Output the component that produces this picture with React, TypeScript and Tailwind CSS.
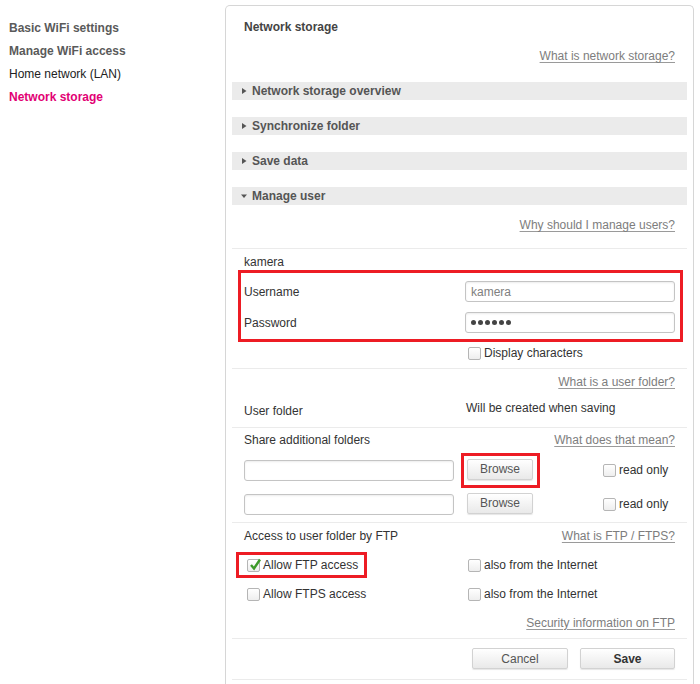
import React from "react";

const navItems = [
  { label: "Basic WiFi settings", cls: "font-bold text-[#5a5a5a]" },
  { label: "Manage WiFi access", cls: "font-bold text-[#5a5a5a]" },
  { label: "Home network (LAN)", cls: "font-normal text-[#222]" },
  { label: "Network storage", cls: "font-bold text-[#e20074]" },
];

function Hr() {
  return <div className="h-px bg-[#ebebeb]" />;
}

function HelpLink({ children }: { children: React.ReactNode }) {
  return <span className="pt-px text-[#7d7d7d] underline underline-offset-2 decoration-[#9a9a9a]">{children}</span>;
}

function Section({ title, open }: { title: string; open?: boolean }) {
  return (
    <div className="flex h-[18px] items-center bg-[#ebebeb] pl-[9px] text-[#555] font-bold">
      <svg width="6" height="6" viewBox="0 0 6 6" className="mr-[5px]">
        {open ? <path d="M0 1.5h6L3 5z" fill="#555" /> : <path d="M1 0v6l4.5-3z" fill="#555" />}
      </svg>
      <span className="pt-px">{title}</span>
    </div>
  );
}

function Checkbox({ checked }: { checked?: boolean }) {
  return (
    <span className="relative inline-block h-[13px] w-[13px] shrink-0 rounded-[2px] border border-[#b5b5b5] bg-gradient-to-b from-white to-[#eeeeee]">
      {checked && (
        <svg width="13" height="13" viewBox="0 0 13 13" className="absolute left-[1px] top-[-2px]">
          <path d="M2 7l3 3.5L11 1.5" fill="none" stroke="#3d9a2a" strokeWidth="2.4" />
        </svg>
      )}
    </span>
  );
}

function TextBox({ children, w = "w-[210px]" }: { children?: React.ReactNode; w?: string }) {
  return (
    <div className={`flex h-[21px] ${w} items-center rounded-[3px] border border-[#c4c4c4] bg-white pl-[5px] shadow-[inset_0_1px_2px_rgba(0,0,0,0.08)]`}>
      {children}
    </div>
  );
}

function Button({ children, bold, w }: { children: React.ReactNode; bold?: boolean; w: string }) {
  return (
    <div
      className={`flex h-[21px] ${w} items-center justify-center rounded-[2px] border border-[#d2d2d2] bg-gradient-to-b from-white to-[#e9e9e9] pt-px shadow-[0_1px_1px_rgba(0,0,0,0.1)] ${
        bold ? "font-bold text-[#333]" : "text-[#555]"
      }`}
    >
      {children}
    </div>
  );
}

function Opt({ label, checked }: { label: string; checked?: boolean }) {
  return (
    <>
      <Checkbox checked={checked} />
      <span className="pt-px">{label}</span>
    </>
  );
}

function BrowseRow({ marked }: { marked?: boolean }) {
  return (
    <div className="flex items-center pl-[12px]">
      <TextBox />
      <div
        className={`ml-[7px] flex h-[35px] w-[79px] items-start border-[3px] pl-[3px] pt-[3px] ${
          marked ? "border-[#ed1c24]" : "border-transparent"
        }`}
      >
        <Button w="w-[66px]">Browse</Button>
      </div>
      <div className="ml-[63px] flex items-center gap-[3px]">
        <Opt label="read only" />
      </div>
    </div>
  );
}

export default function App() {
  return (
    <div
      className="flex h-[684px] w-[700px] overflow-hidden bg-white text-[12px] leading-[15px] text-[#333]"
      style={{ fontFamily: '"Liberation Sans", Arial, sans-serif' }}
    >
      <nav className="flex w-[225px] shrink-0 flex-col pl-[9px] pt-[17px]">
        {navItems.map((n) => (
          <div key={n.label} className={`h-[23px] leading-[23px] ${n.cls}`}>
            {n.label}
          </div>
        ))}
      </nav>

      <main className="mt-[5px] w-[469px] shrink-0 rounded-t-[5px] border border-b-0 border-[#d6d6d6] px-[6px]">
        <div className="flex h-[42px] items-center pl-[12px] pt-px font-bold text-[#444]">Network storage</div>
        <div className="flex h-[16px] items-center justify-end pr-[12px]">
          <HelpLink>What is network storage?</HelpLink>
        </div>
        <div className="flex flex-col gap-[17px] pt-[18px]">
          <Section title="Network storage overview" />
          <Section title="Synchronize folder" />
          <Section title="Save data" />
          <Section title="Manage user" open />
        </div>
        <div className="flex h-[40px] items-center justify-end pr-[12px]">
          <HelpLink>Why should I manage users?</HelpLink>
        </div>
        <div className="h-[3px]" />
        <Hr />

        <div className="h-[21px] pl-[12px] pt-[6px]">kamera</div>
        <div className="ml-[6px] mr-[4px] flex flex-col gap-[10px] border-[3px] border-[#ed1c24] pb-[6px] pl-[3px] pr-[5px] pt-[8px]">
          <div className="flex h-[21px] items-center justify-between">
            <span className="pt-px">Username</span>
            <TextBox>
              <span className="pt-px text-[#808080]">kamera</span>
            </TextBox>
          </div>
          <div className="flex h-[21px] items-center justify-between">
            <span className="pt-px">Password</span>
            <TextBox>
              <span className="flex gap-[2px]">
                {[0, 1, 2, 3, 4, 5].map((i) => (
                  <span key={i} className="h-[5px] w-[5px] rounded-full bg-[#444]" />
                ))}
              </span>
            </TextBox>
          </div>
        </div>
        <div className="flex h-[22px] items-center gap-[3px] pl-[236px]">
          <Opt label="Display characters" />
        </div>
        <div className="h-[4px]" />
        <Hr />

        <div className="flex h-[26px] items-center justify-end pr-[12px]">
          <HelpLink>What is a user folder?</HelpLink>
        </div>
        <div className="flex h-[32px] items-start">
          <span className="w-[234px] pl-[12px] pt-[9px]">User folder</span>
          <span className="pt-[6px]">Will be created when saving</span>
        </div>
        <Hr />

        <div className="flex h-[24px] items-center justify-between pl-[12px] pr-[12px]">
          <span className="pt-px">Share additional folders</span>
          <HelpLink>What does that mean?</HelpLink>
        </div>
        <div className="flex h-[36px] items-center">
          <BrowseRow marked />
        </div>
        <div className="flex h-[32px] items-center">
          <BrowseRow />
        </div>
        <div className="h-[2px]" />
        <Hr />

        <div className="flex h-[26px] items-center justify-between pl-[12px] pr-[12px]">
          <span className="pt-px">Access to user folder by FTP</span>
          <HelpLink>What is FTP / FTPS?</HelpLink>
        </div>
        <div className="flex h-[32px] items-center">
          <div className="w-[236px] pl-[4px]">
            <div className="flex h-[26px] w-[131px] items-center gap-[3px] border-[3px] border-[#ed1c24] pl-[8px]">
              <Opt label="Allow FTP access" checked />
            </div>
          </div>
          <div className="flex items-center gap-[3px]">
            <Opt label="also from the Internet" />
          </div>
        </div>
        <div className="flex h-[26px] items-center">
          <div className="flex w-[236px] items-center gap-[3px] pl-[15px]">
            <Opt label="Allow FTPS access" />
          </div>
          <div className="flex items-center gap-[3px]">
            <Opt label="also from the Internet" />
          </div>
        </div>
        <div className="flex h-[31px] items-center justify-end pr-[12px]">
          <HelpLink>Security information on FTP</HelpLink>
        </div>
        <Hr />

        <div className="flex h-[40px] items-start justify-end gap-[12px] pr-[12px] pt-[9px]">
          <Button w="w-[96px]">Cancel</Button>
          <Button w="w-[95px]" bold>
            Save
          </Button>
        </div>
        <Hr />
      </main>
    </div>
  );
}
